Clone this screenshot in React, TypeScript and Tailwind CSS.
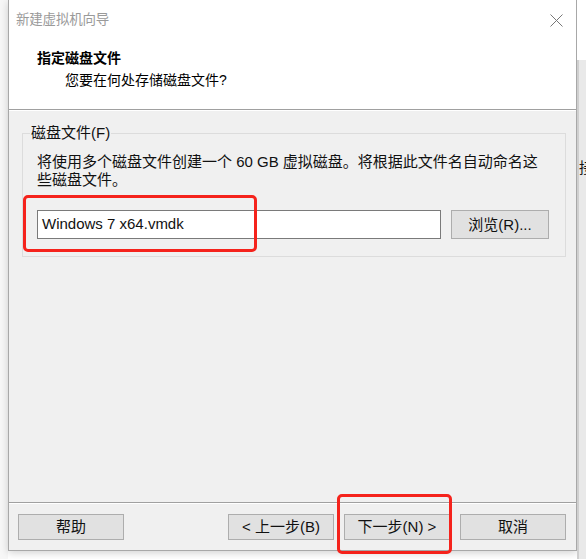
import React from 'react';

const font = { fontFamily: '"Liberation Sans", "Noto Sans CJK SC", sans-serif' };

function Btn({ children }: { children: React.ReactNode }) {
  return (
    <button className="w-[106px] h-[26px] bg-[#e1e1e1] border border-[#adadad] text-[15px] leading-[20px] text-[#111]">
      {children}
    </button>
  );
}

export default function App() {
  return (
    <div className="relative w-[586px] h-[559px] bg-white overflow-hidden flex" style={font}>
      {/* left gap */}
      <div className="w-[8px] shrink-0 bg-[#f7f7f7]" />

      {/* wizard window */}
      <div className="w-[569px] shrink-0 h-[551px] flex flex-col border-x border-b border-[#a8a8a8] bg-[#f0f0f0] shadow-[0_2px_8px_rgba(0,0,0,0.18)]">
        {/* header */}
        <div className="h-[110px] bg-white border-b border-[#a0a0a0] flex flex-col">
          <div className="h-[40px] flex items-center justify-between pl-[7px] pr-[13px]">
            <span className="text-[13.5px] text-[#9a9a9a] tracking-[-0.2px]">新建虚拟机向导</span>
            <svg width="13" height="13" viewBox="0 0 13 13" className="text-[#777]">
              <path d="M0.5 0.5 L12.5 12.5 M12.5 0.5 L0.5 12.5" stroke="currentColor" strokeWidth="1" fill="none" />
            </svg>
          </div>
          <div className="pl-[28px] text-[14px] leading-[20px] font-bold text-black mt-[8px]">指定磁盘文件</div>
          <div className="pl-[56px] text-[14px] leading-[20px] text-black mt-[2px]">您要在何处存储磁盘文件?</div>
        </div>

        {/* body */}
        <div className="flex-1 border-t border-white pt-[12px] pl-[13px] pr-[11px]">
          <fieldset className="border border-[#dcdcdc] pl-[14px] pr-[16px] pb-[17px]">
            <legend className="-ml-[7px] px-[1px] text-[15px] leading-[20px] text-[#111]">磁盘文件(F)</legend>
            <p className="pt-[10px] text-[15px] leading-[18px] text-[#111]">
              将使用多个磁盘文件创建一个 60 GB 虚拟磁盘。将根据此文件名自动命名这
              <br />
              些磁盘文件。
            </p>
            <div className="flex items-center gap-[10px] mt-[21px]">
              <div className="w-[404px] h-[29px] bg-white border border-[#7a7a7a] flex items-center pl-[4px] text-[15px] text-[#111]">
                Windows 7 x64.vmdk
              </div>
              <button className="w-[98px] h-[29px] bg-[#e1e1e1] border border-[#adadad] text-[15px] leading-[20px] text-[#111]">
                浏览(R)...
              </button>
            </div>
          </fieldset>
        </div>

        {/* footer */}
        <div className="h-[48px] border-t border-[#a0a0a0] flex flex-col">
          <div className="border-t border-white flex items-start pt-[10px] pl-[9px] pr-[10px]">
            <Btn>帮助</Btn>
            <div className="flex-1" />
            <div className="flex gap-[10px]">
              <Btn>&lt; 上一步(B)</Btn>
              <Btn>下一步(N) &gt;</Btn>
              <Btn>取消</Btn>
            </div>
          </div>
        </div>
      </div>

      {/* window behind, right edge */}
      <div className="flex-1 min-w-0 flex flex-col">
        <div className="h-[60px] bg-white" />
        <div className="flex-1 bg-[#e9e9e9] border-l-2 border-[#cfcfcf] overflow-hidden">
          <div className="mt-[99px] text-[15px] leading-[18px] text-[#111] whitespace-nowrap">接</div>
        </div>
      </div>

      {/* red annotation boxes */}
      <div className="absolute left-[23px] top-[195px] w-[234px] h-[57px] border-[3px] border-[#f5231c] rounded-[5px]" />
      <div className="absolute left-[337px] top-[494px] w-[115px] h-[60px] border-[3px] border-[#f5231c] rounded-[5px]" />
    </div>
  );
}
